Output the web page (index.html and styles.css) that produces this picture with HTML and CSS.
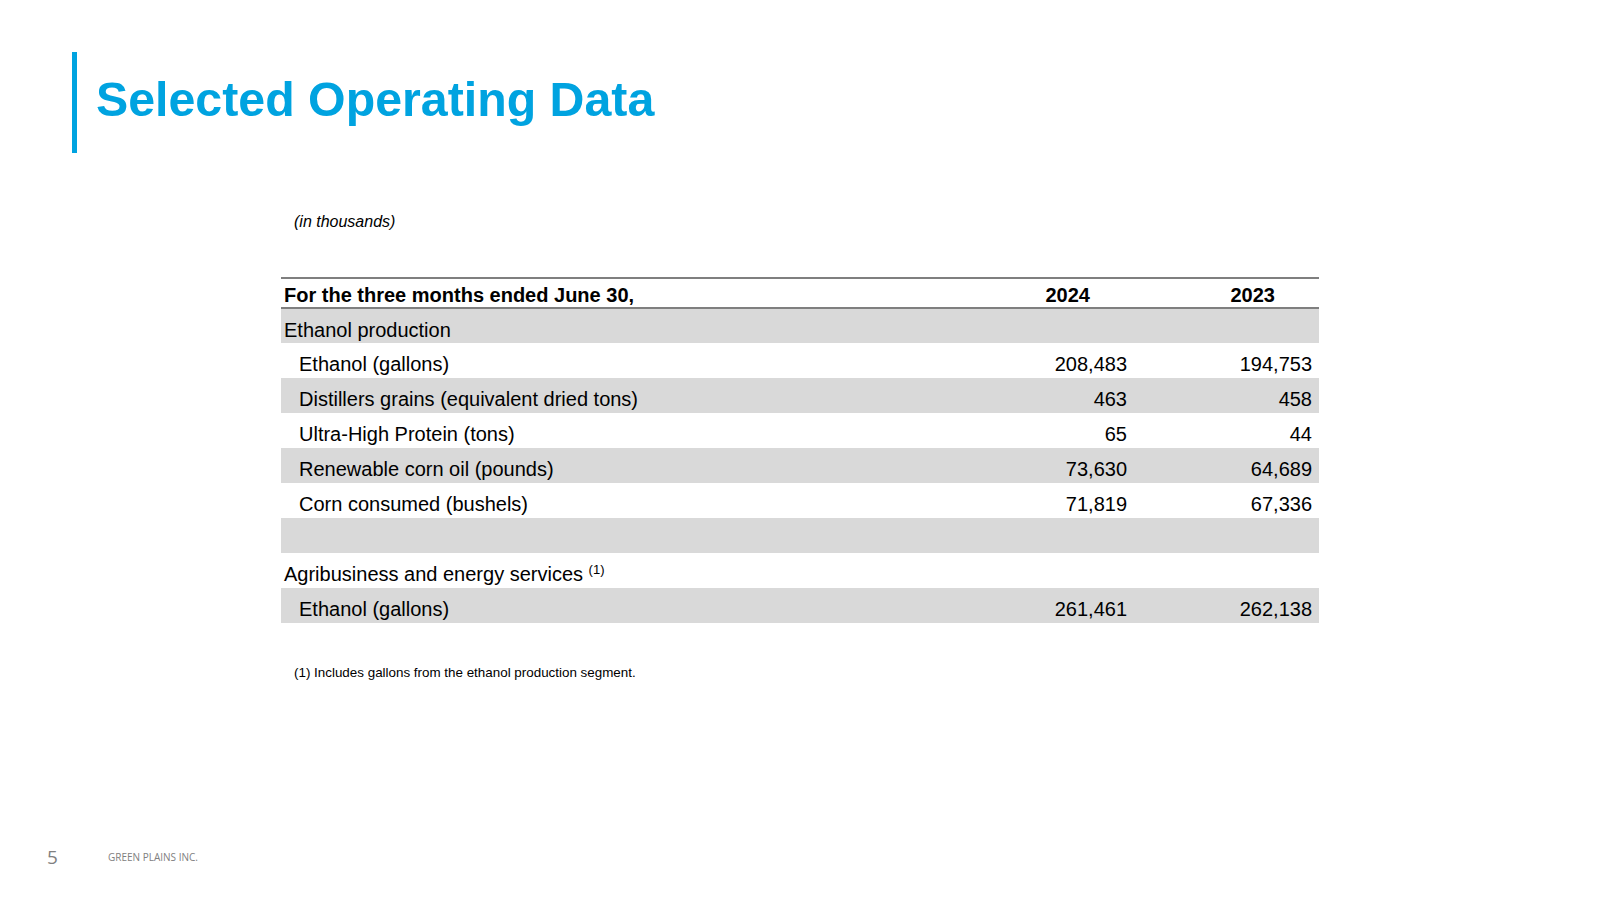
FILE: index.html
```html
<!DOCTYPE html>
<html lang="en">
<head>
<meta charset="utf-8">
<title>Selected Operating Data</title>
<link rel="stylesheet" href="styles.css">
</head>
<body>
<div class="slide">
  <header class="title-block">
    <h1 class="title">Selected Operating Data</h1>
  </header>
  <main class="content">
    <p class="unit-note">(in thousands)</p>
    <table class="data">
      <colgroup>
        <col>
        <col class="num-col">
        <col class="num-col">
      </colgroup>
      <thead>
        <tr>
          <th class="label">For the three months ended June 30,</th>
          <th class="year">2024</th>
          <th class="year">2023</th>
        </tr>
      </thead>
      <tbody>
        <tr class="shade">
          <td class="label">Ethanol production</td>
          <td class="num"></td>
          <td class="num"></td>
        </tr>
        <tr>
          <td class="label indent">Ethanol (gallons)</td>
          <td class="num">208,483</td>
          <td class="num">194,753</td>
        </tr>
        <tr class="shade">
          <td class="label indent">Distillers grains (equivalent dried tons)</td>
          <td class="num">463</td>
          <td class="num">458</td>
        </tr>
        <tr>
          <td class="label indent">Ultra-High Protein (tons)</td>
          <td class="num">65</td>
          <td class="num">44</td>
        </tr>
        <tr class="shade">
          <td class="label indent">Renewable corn oil (pounds)</td>
          <td class="num">73,630</td>
          <td class="num">64,689</td>
        </tr>
        <tr>
          <td class="label indent">Corn consumed (bushels)</td>
          <td class="num">71,819</td>
          <td class="num">67,336</td>
        </tr>
        <tr class="shade">
          <td class="label"></td>
          <td class="num"></td>
          <td class="num"></td>
        </tr>
        <tr>
          <td class="label">Agribusiness and energy services <sup class="fn">(1)</sup></td>
          <td class="num"></td>
          <td class="num"></td>
        </tr>
        <tr class="shade">
          <td class="label indent">Ethanol (gallons)</td>
          <td class="num">261,461</td>
          <td class="num">262,138</td>
        </tr>
      </tbody>
    </table>
    <p class="footnote">(1) Includes gallons from the ethanol production segment.</p>
  </main>
  <footer class="footer">
    <span class="page-num">5</span>
    <span class="company">GREEN PLAINS INC.</span>
  </footer>
</div>
</body>
</html>
```

FILE: styles.css
```css
html, body {
  margin: 0;
  padding: 0;
  background: #ffffff;
}

.slide {
  width: 1600px;
  height: 900px;
  display: flex;
  flex-direction: column;
  font-family: "Liberation Sans", Arial, sans-serif;
  color: #000000;
  box-sizing: border-box;
  overflow: hidden;
}

.title-block {
  margin: 52px 0 0 72px;
  height: 101px;
  border-left: 5px solid #00a3e0;
  padding-left: 19px;
  display: flex;
  align-items: center;
  box-sizing: border-box;
}

.title {
  margin: 0 0 6px 0;
  font-size: 48.3px;
  line-height: 1;
  font-weight: 700;
  color: #00a3e0;
}

.content {
  margin-left: 281px;
  width: 1038px;
}

.unit-note {
  margin: 59px 0 0 0;
  padding-left: 13px;
  font-size: 16px;
  line-height: 20px;
  font-style: italic;
}

.data {
  margin-top: 45px;
  width: 1038px;
  border-collapse: collapse;
  font-size: 20px;
}

.num-col {
  width: 185px;
}

.data thead tr {
  border-top: 2px solid #7f7f7f;
  border-bottom: 2px solid #7f7f7f;
}

.data th {
  padding: 4px 0 0 0;
  font-weight: 700;
  line-height: 24px;
  vertical-align: top;
}

.data th.label {
  text-align: left;
  padding-left: 3px;
}

.data th.year {
  text-align: right;
  padding-right: 44px;
}

.data tbody tr {
  height: 35px;
}

.data td {
  padding: 10px 0 0 0;
  line-height: 23px;
  vertical-align: top;
}

.data td.label {
  padding-left: 3px;
}

.data td.indent {
  padding-left: 18px;
}

.data td.num {
  text-align: right;
  padding-right: 7px;
}

.shade td {
  background: #d9d9d9;
}

.fn {
  font-size: 13px;
  line-height: 0;
  vertical-align: 7px;
}

.footnote {
  margin: 41px 0 0 0;
  padding-left: 13px;
  font-size: 13.4px;
  line-height: 17px;
}

.footer {
  margin-top: auto;
  height: 30px;
  margin-bottom: 28px;
  display: flex;
  align-items: center;
  padding-left: 47px;
  font-family: "Open Sans", "Liberation Sans", sans-serif;
  color: #808080;
}

.page-num {
  font-size: 19px;
  width: 61px;
}

.company {
  font-size: 10px;
  letter-spacing: 0;
}
```
